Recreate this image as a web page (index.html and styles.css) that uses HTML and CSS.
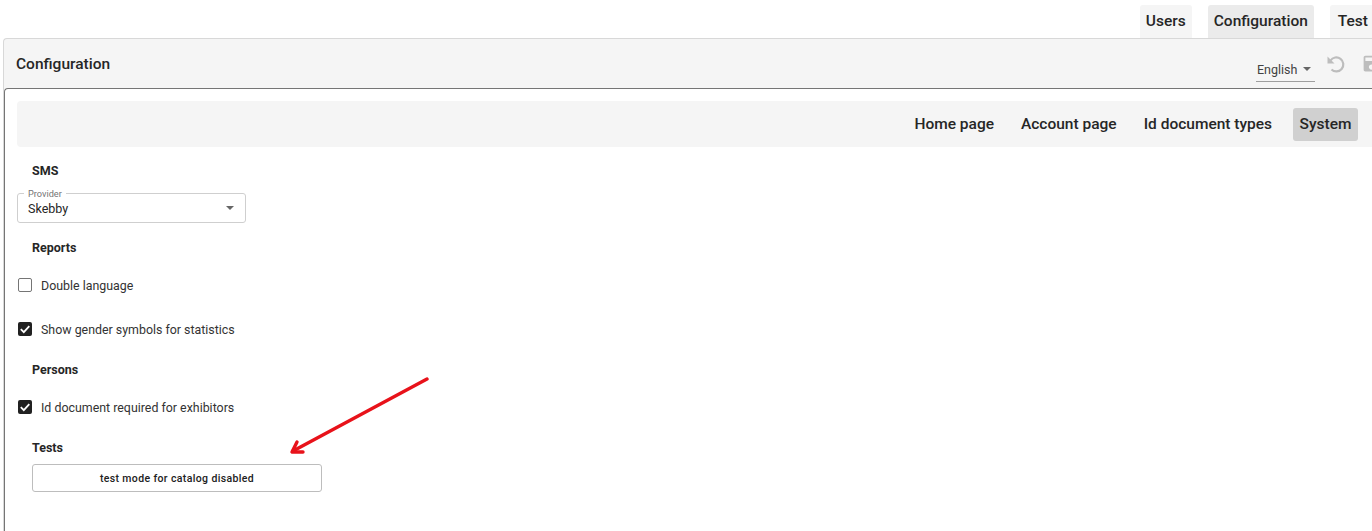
FILE: index.html
```html
<!DOCTYPE html>
<html lang="en">

<head>
    <meta charset="UTF-8">
    <meta name="viewport" content="width=device-width, initial-scale=1.0">
    <title>Configuration</title>
    <link rel="stylesheet" href="styles.css">
</head>

<body>
    <div class="app">

        <nav class="top-nav">
            <a class="top-link">Users</a>
            <a class="top-link active">Configuration</a>
            <a class="top-link last">Test</a>
        </nav>

        <div class="panel">
            <div class="panel-header">
                <div class="panel-title">Configuration</div>
                <div class="panel-tools">
                    <div class="lang-select">
                        <span>English</span>
                        <span class="caret"></span>
                    </div>
                    <svg class="undo-icon" viewBox="0 0 18 18" width="18" height="18">
                        <path class="undo-arc" d="M3.5 5.5A7 7 0 1 1 4.5 14.5" />
                        <path class="undo-head" d="M0.5 1.5V8.5H7.5z" />
                    </svg>
                    <svg class="save-icon" viewBox="0 0 24 24" width="21" height="21">
                        <path d="M17 3H5c-1.11 0-2 .9-2 2v14c0 1.1.89 2 2 2h14c1.1 0 2-.9 2-2V7l-4-4zm-5 16c-1.66 0-3-1.34-3-3s1.34-3 3-3 3 1.34 3 3-1.34 3-3 3zm3-10H5V5h10v4z" />
                    </svg>
                </div>
            </div>

            <div class="panel-body">
                <div class="sub-nav">
                    <a class="sub-link">Home page</a>
                    <a class="sub-link">Account page</a>
                    <a class="sub-link">Id document types</a>
                    <a class="sub-link active">System</a>
                </div>

                <h4 class="section-title first">SMS</h4>
                <div class="select-field">
                    <span class="select-label">Provider</span>
                    <span>Skebby</span>
                    <span class="caret"></span>
                </div>

                <h4 class="section-title reports">Reports</h4>
                <label class="check-row double">
                    <span class="checkbox"></span>
                    Double language
                </label>
                <label class="check-row gender">
                    <span class="checkbox checked">
                        <svg viewBox="0 0 14 14" width="14" height="14"><path d="M2.8 7.2l3 3 5.5-6" /></svg>
                    </span>
                    Show gender symbols for statistics
                </label>

                <h4 class="section-title persons">Persons</h4>
                <label class="check-row exhibitors">
                    <span class="checkbox checked">
                        <svg viewBox="0 0 14 14" width="14" height="14"><path d="M2.8 7.2l3 3 5.5-6" /></svg>
                    </span>
                    Id document required for exhibitors
                </label>

                <h4 class="section-title tests">Tests</h4>
                <button class="test-button" type="button">test mode for catalog disabled</button>
            </div>
        </div>

        <!-- annotation arrow -->
        <svg class="arrow" width="150" height="85" viewBox="0 0 150 85">
            <path d="M138 2L4 74" />
            <path d="M8 65L3 75H14" />
        </svg>
    </div>
</body>

</html>
```

FILE: styles.css
```css
html,
body {
    margin: 0;
    height: 531px;
    overflow: hidden;
    background-color: #fff;
}

body {
    font-family: Roboto, Arial, sans-serif;
    color: #262626;
}

.app {
    position: relative;
    width: 1384px;
    height: 531px;
}

.top-nav {
    display: flex;
    justify-content: flex-end;
    gap: 16px;
    height: 38px;
    padding: 5px 10px 0 0;
    box-sizing: border-box;
}

.top-link {
    display: flex;
    align-items: center;
    padding: 0 6px 2px;
    background-color: #f5f5f5;
    border-radius: 3px 3px 0 0;
    font-size: 15.5px;
    font-weight: 500;
}

.top-link.active {
    background-color: #ebebeb;
}

.top-link.last {
    padding-left: 8px;
}

.panel {
    margin-left: 3px;
    height: 493px;
    background-color: #f5f5f5;
    border-top: 1px solid #d8d8d8;
    border-left: 1px solid #d8d8d8;
    border-radius: 4px 0 0 0;
    box-sizing: border-box;
}

.panel-header {
    display: flex;
    justify-content: space-between;
    height: 49px;
    padding: 0 2px 0 12px;
}

.panel-title {
    margin-top: 16px;
    font-size: 15.5px;
    font-weight: 500;
    line-height: 19px;
}

.panel-tools {
    display: flex;
    align-items: flex-start;
}

.lang-select {
    display: flex;
    align-items: center;
    width: 58px;
    height: 24px;
    margin-top: 18px;
    padding-left: 1px;
    border-bottom: 1px solid #9e9e9e;
    font-size: 12.5px;
    color: #424242;
}

.lang-select .caret {
    margin-left: 6px;
}

.caret {
    width: 0;
    height: 0;
    border-left: 4px solid transparent;
    border-right: 4px solid transparent;
    border-top: 4px solid #666;
}

.undo-icon {
    flex-shrink: 0;
    margin: 16px 0 0 12px;
}

.undo-arc {
    fill: none;
    stroke: #bdbdbd;
    stroke-width: 2.2;
}

.undo-head {
    fill: #bdbdbd;
}

.save-icon {
    flex-shrink: 0;
    margin: 14px 0 0 16px;
    fill: #bdbdbd;
}

.panel-body {
    height: 444px;
    padding: 12px 0 0 12px;
    background-color: #fff;
    border: 1px solid #757575;
    border-right: none;
    border-bottom: none;
    border-radius: 4px 0 0 0;
    box-sizing: border-box;
}

.sub-nav {
    display: flex;
    justify-content: flex-end;
    align-items: center;
    gap: 15px;
    height: 46px;
    padding-right: 26px;
    background-color: #f5f5f5;
    border-radius: 4px 0 0 4px;
}

.sub-link {
    padding: 8px 6px;
    height: 17px;
    line-height: 17px;
    font-size: 15.5px;
    font-weight: 500;
    border-radius: 3px;
}

.sub-link.active {
    padding: 8px 6.5px;
    background-color: #d0d0d0;
}

.section-title {
    margin: 0;
    padding-left: 15px;
    font-size: 12.5px;
    font-weight: 700;
    line-height: 16px;
}

.section-title.first {
    margin-top: 16px;
}

.section-title.reports {
    margin-top: 17px;
}

.section-title.persons {
    margin-top: 23px;
}

.section-title.tests {
    margin-top: 23px;
}

.select-field {
    position: relative;
    display: flex;
    align-items: center;
    justify-content: space-between;
    width: 229px;
    height: 30px;
    margin-top: 14px;
    padding: 0 11px 0 10px;
    border: 1px solid #cfcfcf;
    border-radius: 3px;
    box-sizing: border-box;
    font-size: 12.5px;
}

.select-label {
    position: absolute;
    top: -6px;
    left: 6px;
    padding: 0 4px;
    background-color: #fff;
    font-size: 9.2px;
    line-height: 11px;
    color: #757575;
}

.check-row {
    display: flex;
    align-items: center;
    gap: 9px;
    height: 20px;
    padding-left: 1px;
    font-size: 12.4px;
    color: #333;
}

.check-row.double {
    margin-top: 19px;
}

.check-row.gender {
    margin-top: 24px;
}

.check-row.exhibitors {
    margin-top: 19px;
}

.checkbox {
    display: flex;
    width: 14px;
    height: 14px;
    box-sizing: border-box;
    border: 1.5px solid #757575;
    border-radius: 2px;
}

.checkbox.checked {
    background-color: #212121;
    border: none;
}

.checkbox svg {
    fill: none;
    stroke: #fff;
    stroke-width: 1.8;
}

.test-button {
    display: block;
    width: 290px;
    height: 28px;
    margin: 8px 0 0 15px;
    padding: 0;
    background-color: #fff;
    border: 1px solid #bdbdbd;
    border-radius: 3px;
    font-family: Roboto, Arial, sans-serif;
    font-size: 10.5px;
    font-weight: 500;
    letter-spacing: 0.37px;
    color: #212121;
}

.arrow {
    position: absolute;
    left: 289px;
    top: 377px;
    fill: none;
    stroke: #e8121a;
    stroke-width: 3.4;
    stroke-linecap: round;
    stroke-linejoin: round;
}
```
